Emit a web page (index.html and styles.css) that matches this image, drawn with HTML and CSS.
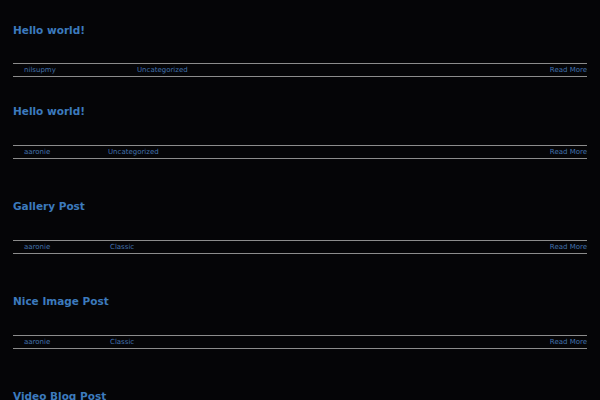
FILE: index.html
```html
<!DOCTYPE html>
<html>
<head>
<meta charset="utf-8">
<link rel="stylesheet" href="styles.css">
</head>
<body>
<div class="posts">
  <article class="post post-short">
    <h2 class="post-title">Hello world!</h2>
    <div class="meta meta-wide">
      <span class="author">nilsupmy</span><span class="cat">Uncategorized</span><span class="more">Read More</span>
    </div>
  </article>
  <article class="post">
    <h2 class="post-title">Hello world!</h2>
    <div class="meta meta-narrow">
      <span class="author">aaronie</span><span class="cat">Uncategorized</span><span class="more">Read More</span>
    </div>
  </article>
  <article class="post">
    <h2 class="post-title">Gallery Post</h2>
    <div class="meta meta-mid">
      <span class="author">aaronie</span><span class="cat">Classic</span><span class="more">Read More</span>
    </div>
  </article>
  <article class="post">
    <h2 class="post-title">Nice Image Post</h2>
    <div class="meta meta-mid">
      <span class="author">aaronie</span><span class="cat">Classic</span><span class="more">Read More</span>
    </div>
  </article>
  <article class="post">
    <h2 class="post-title">Video Blog Post</h2>
  </article>
</div>
</body>
</html>
```
FILE: styles.css
```css
html, body {
  margin: 0;
  background: #050507;
}
body {
  font-family: "DejaVu Sans", sans-serif;
}
.posts {
  padding: 24px 13px 0;
}
.post {
  margin-bottom: 41px;
}
.post-short {
  margin-bottom: 28px;
}
.post-title {
  margin: 0 0 28px;
  font-size: 10.5px;
  line-height: 12px;
  font-weight: bold;
  color: #3c7abd;
}
.post-short .post-title {
  margin-bottom: 27px;
}
.meta {
  display: flex;
  align-items: center;
  height: 12px;
  border-top: 1px solid #8c8c8c;
  border-bottom: 1px solid #8c8c8c;
  font-size: 7px;
  line-height: 12px;
  color: #4372ad;
  white-space: nowrap;
}
.author {
  flex: none;
  box-sizing: border-box;
  padding-left: 11px;
}
.meta-wide .author { width: 124px; }
.meta-narrow .author { width: 95px; }
.meta-mid .author { width: 97px; }
.cat {
  flex: 1;
}
.more {
  flex: none;
}
```
